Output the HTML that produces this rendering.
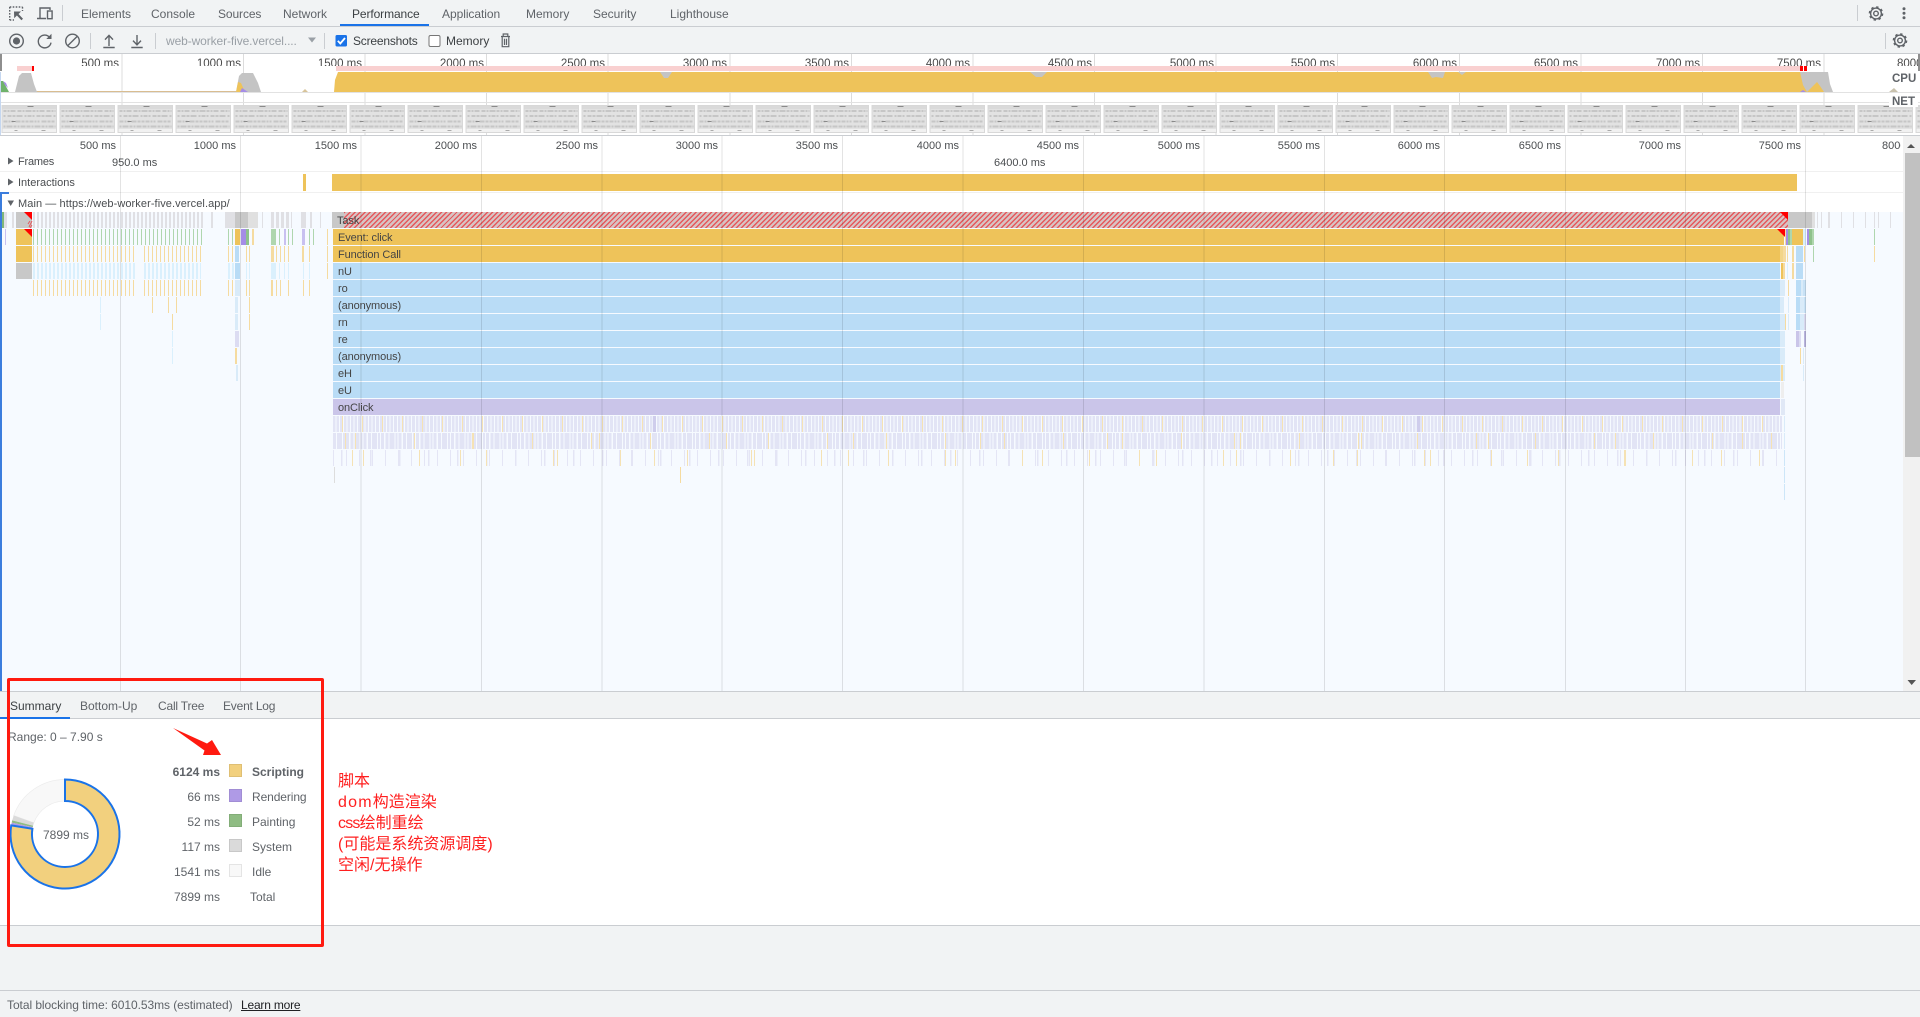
<!DOCTYPE html>
<html lang="en"><head><meta charset="utf-8"><title>Performance</title>
<style>
html,body{margin:0;padding:0;background:#fff}
#p{position:relative;width:1920px;height:1017px;overflow:hidden;background:#fff;font-family:"Liberation Sans","Noto Sans CJK SC",sans-serif;font-size:12px;color:#5f6368;filter:blur(.35px)}
.t{position:absolute;white-space:nowrap;line-height:16px}
.b{position:absolute;display:block}
i{position:absolute;display:block;height:16px}
.s{font-size:11px;color:#4a4d50}
.l{color:#444;padding-left:5px;font-size:11px;line-height:18px;font-style:normal;box-sizing:border-box;overflow:hidden;letter-spacing:-.1px}
.Y{background:#eec35a}.B{background:#b9dcf6}.P{background:#cac5e9}
.ov{position:absolute;top:54px;height:12px;overflow:hidden;width:100px;text-align:right;font-size:11.5px;line-height:20px;color:#4a4a4a}
.ru{position:absolute;top:138px;width:100px;text-align:right;font-size:11px;line-height:16px;color:#4a4d50}
.sw{position:absolute;left:229px;width:11px;height:11px;border:1px solid rgba(0,0,0,.08)}
.v{position:absolute;width:120px;left:100px;text-align:right;line-height:16px;color:#5f6368;font-size:12px}
svg{position:absolute;left:0;top:0;display:block}
</style></head><body><div id="p">

<!-- top bars -->
<div class="b" style="left:0;top:0;width:1920px;height:54px;background:#f1f3f4"></div>
<div class="b" style="left:0;top:26px;width:1920px;height:1px;background:#cacdd1"></div>
<div class="b" style="left:0;top:53px;width:1920px;height:1px;background:#cacdd1"></div>
<div class="b" style="left:340px;top:24px;width:89px;height:2px;background:#1a73e8"></div>
<div class="t" style="left:81px;top:6px">Elements</div>
<div class="t" style="left:151px;top:6px">Console</div>
<div class="t" style="left:218px;top:6px;letter-spacing:-.1px">Sources</div>
<div class="t" style="left:283px;top:6px">Network</div>
<div class="t" style="left:352px;top:6px;color:#3c4043;letter-spacing:-.1px">Performance</div>
<div class="t" style="left:442px;top:6px;letter-spacing:-.05px">Application</div>
<div class="t" style="left:526px;top:6px">Memory</div>
<div class="t" style="left:593px;top:6px">Security</div>
<div class="t" style="left:670px;top:6px">Lighthouse</div>
<div class="t" style="left:166px;top:33px;color:#9aa0a6;letter-spacing:-.1px">web-worker-five.vercel....</div>
<div class="t" style="left:353px;top:33px;color:#3c4043;letter-spacing:-.2px">Screenshots</div>
<div class="t" style="left:446px;top:33px;color:#3c4043">Memory</div>

<svg width="1920" height="54" fill="none" stroke="#5f6368" stroke-width="1.4">
 <!-- inspect -->
 <path d="M9.7 7H22.5M9.7 7V20M22.5 7V11M9.7 20H14" stroke-dasharray="1.6 1.4"/>
 <path d="M14 11.5h7l-2.5 2.5 4.5 4.8-1.6 1.5-4.5-4.8-2.7 2.7z" fill="#5f6368" stroke="none"/>
 <!-- device -->
 <path d="M40 18V8H50V10M37 18.5H46"/><rect x="47.5" y="11" width="4.6" height="7.7"/>
 <path d="M62.5 5V21M90.5 33V49M155.5 33V49M324.5 33V49M1857.5 5V21M1885.5 33V49" stroke="#cacdd1" stroke-width="1"/>
 <!-- record -->
 <circle cx="16.5" cy="41" r="6.8"/><circle cx="16.5" cy="41" r="3.6" fill="#5f6368" stroke="none"/>
 <!-- reload -->
 <path d="M49.5 37.2A6.4 6.4 0 1 0 51 42.6"/><path d="M51.5 33.8V39H46.3z" fill="#5f6368" stroke="none"/>
 <!-- clear -->
 <circle cx="72.5" cy="41" r="6.8"/><path d="M67.7 45.8L77.3 36.2"/>
 <!-- upload/download -->
 <path d="M109 46V36M105 39.6L109 35.4 113 39.6M103.3 47.5H114.7"/>
 <path d="M137 35V44M133 40.6L137 44.8 141 40.6M131.3 47.5H142.7"/>
 <path d="M308 37.5H316L312 42.5z" fill="#9aa0a6" stroke="none"/>
 <!-- checkboxes -->
 <rect x="335.5" y="35" width="11.5" height="11.5" rx="1.5" fill="#1a73e8" stroke="none"/>
 <path d="M337.8 40.8L340.3 43.5 345 38" stroke="#fff" stroke-width="1.8"/>
 <rect x="429" y="35.5" width="11" height="11" rx="1.5" fill="#fff" stroke="#767676" stroke-width="1"/>
 <!-- trash -->
 <path d="M501 36.5H510M503.2 36V34H507.8V36M502.2 37V46.7H508.8V37M504.5 38.7V45M506.5 38.7V45" stroke-width="1.2"/>
 <!-- gears -->
 <g transform="translate(1876 13.5)"><circle r="5.4"/><circle r="2.3"/><circle r="6.5" stroke-width="1.6" stroke-dasharray="2.4 2.7"/></g>
 <g transform="translate(1900 40.5)"><circle r="5.4"/><circle r="2.3"/><circle r="6.5" stroke-width="1.6" stroke-dasharray="2.4 2.7"/></g>
 <g fill="#5f6368" stroke="none"><circle cx="1904" cy="8.7" r="1.5"/><circle cx="1904" cy="13.2" r="1.5"/><circle cx="1904" cy="17.7" r="1.5"/></g>
</svg>

<!-- overview labels -->
<div class="ov" style="left:19px">500 ms</div>
<div class="ov" style="left:141px">1000 ms</div>
<div class="ov" style="left:262px">1500 ms</div>
<div class="ov" style="left:384px">2000 ms</div>
<div class="ov" style="left:505px">2500 ms</div>
<div class="ov" style="left:627px">3000 ms</div>
<div class="ov" style="left:749px">3500 ms</div>
<div class="ov" style="left:870px">4000 ms</div>
<div class="ov" style="left:992px">4500 ms</div>
<div class="ov" style="left:1114px">5000 ms</div>
<div class="ov" style="left:1235px">5500 ms</div>
<div class="ov" style="left:1357px">6000 ms</div>
<div class="ov" style="left:1478px">6500 ms</div>
<div class="ov" style="left:1600px">7000 ms</div>
<div class="ov" style="left:1721px">7500 ms</div>
<div class="ov" style="left:1897px;width:21px;text-align:left">8000 ms</div>

<!-- overview chart -->
<svg width="1920" height="136" style="top:0">
 <defs>
 <pattern id="th" width="58" height="28" patternUnits="userSpaceOnUse" patternTransform="translate(1.5 105)">
  <rect x="0" y="0" width="55.5" height="28" fill="#e2e2e2"/>
  <rect x="0" y="0" width="55.5" height="4" fill="#dadada"/>
  <rect x="26" y="1" width="6" height="1" fill="#8a8a8a"/>
  <g fill="none" stroke-width="2" stroke="#c6c6c6">
   <path d="M2 6H54" stroke-dasharray="3 1 2 1 5 2 4 1 2 1 6 1"/>
   <path d="M2 11H54" stroke-dasharray="2 2 4 1 3 1 6 2 2 1 4 1"/>
   <path d="M2 16.5H54" stroke-dasharray="4 1 2 1 2 2 5 1 3 1 3 1"/>
   <path d="M2 21.5H54" stroke-dasharray="2 1 6 1 3 1 2 1 5 1 4 1"/>
  </g>
  <rect x="10" y="16" width="4" height="1" fill="#8a8a8a"/>
  <rect x="0" y="24" width="55.5" height="4" fill="#f1f1f1"/>
  <rect x="13" y="25" width="3" height="1" fill="#aaa"/><rect x="40" y="25" width="4" height="1" fill="#aaa"/>
  <rect x=".5" y=".5" width="54.5" height="27" fill="none" stroke="#d8d8d8"/>
 </pattern>
 </defs>
 <path d="M122 54V135M243.5 54V135M365 54V135M486.5 54V135M608 54V135M730 54V135M851.5 54V135M973 54V135M1094.5 54V135M1216 54V135M1337.5 54V135M1459.5 54V135M1581 54V135M1702.5 54V135M1824 54V135" stroke="#dcdcdc" fill="none"/>
 <path d="M0 92.5H1920M0 102.5H1920" stroke="#e2e2e2" fill="none"/>
 <rect x="0" y="105" width="1920" height="28" fill="url(#th)"/>
 <rect x="17" y="66" width="15" height="5" fill="#f9d0d0"/><rect x="32" y="66" width="2" height="5" fill="#f00"/>
 <rect x="336" y="66" width="1464" height="5" fill="#f9d0d0"/><rect x="1800" y="66" width="3" height="5" fill="#f00"/><rect x="1804" y="66" width="3" height="5" fill="#f00"/>
 <rect x="36" y="91" width="200" height="1" fill="#d9bd90"/>
 <path d="M0 92V81H3L9 92Z" fill="#6fb26b"/><path d="M3 81L6 83 8 88 5 85Z" fill="#a58de6"/>
 <path d="M15 92L19 76 22 73H31L34 84 37 92Z" fill="#c4c4c4"/>
 <path d="M236 92L239 76 242 73H253L258 83 261 92Z" fill="#c4c4c4"/>
 <path d="M236 92L238 82 241 83 245 92Z" fill="#eec35a"/><path d="M240 92L242 88 248 92Z" fill="#a58de6"/>
 <path d="M302 92L305 89 308 92Z" fill="#d8c49a"/>
 <path d="M1799 72H1828L1830 84 1833 92H1800Z" fill="#c4c4c4"/>
 <path d="M334 92L335 80 338 72H1800L1803 85 1807 92Z" fill="#eec35a"/>
 <path d="M1807 92L1812 87 1817 82 1820 86 1824 92Z" fill="#eec35a"/>
 <path d="M1800 92L1803 90 1806 92Z" fill="#a58de6"/>
 <path d="M1428 72H1445L1443 78 1436 77 1432 78Z" fill="#c4c4c4"/>
 <path d="M1458 72H1466L1462 75Z" fill="#c4c4c4"/>
 <path d="M660 72H672L668 78 664 78Z" fill="#c4c4c4"/>
 <path d="M1030 72H1047L1042 77 1036 77Z" fill="#c4c4c4"/>
 <path d="M1889 92L1894 88 1898 92Z" fill="#c9c2ae"/>
 <rect x="0" y="72" width="1" height="63" fill="#c5d7f0"/>
 <rect x="0" y="54" width="2" height="17" fill="#8e8e8e"/>
 <rect x="1918" y="54" width="2" height="17" fill="#8e8e8e"/>
 <rect x="1889" y="95" width="29" height="12" fill="#fff"/>
</svg>
<div class="t" style="left:1892px;top:71px;font-weight:bold;font-size:11.5px">CPU</div>
<div class="t" style="left:1892px;top:94px;font-weight:bold;font-size:11.5px">NET</div>
<div class="b" style="left:0;top:135px;width:1920px;height:1px;background:#cacdd1"></div>

<!-- timeline -->
<div class="b" style="left:1903px;top:136px;width:17px;height:555px;background:#f1f1f1"></div>
<div class="b" style="left:1905px;top:153px;width:15px;height:304px;background:#c1c1c1"></div>
<div class="b" style="left:0;top:212px;width:1903px;height:479px;background:#f6faff"></div>
<div class="b" style="left:0;top:171px;width:1903px;height:1px;background:#f0f0f0"></div>
<div class="b" style="left:0;top:192px;width:1903px;height:1px;background:#f0f0f0"></div>
<div class="b" style="left:0;top:192px;width:9px;height:2px;background:#3b7ddd"></div>
<div class="b" style="left:0;top:192px;width:2px;height:499px;background:#3b7ddd"></div>

<div class="ru" style="left:16px">500 ms</div>
<div class="ru" style="left:136px">1000 ms</div>
<div class="ru" style="left:257px">1500 ms</div>
<div class="ru" style="left:377px">2000 ms</div>
<div class="ru" style="left:498px">2500 ms</div>
<div class="ru" style="left:618px">3000 ms</div>
<div class="ru" style="left:738px">3500 ms</div>
<div class="ru" style="left:859px">4000 ms</div>
<div class="ru" style="left:979px">4500 ms</div>
<div class="ru" style="left:1100px">5000 ms</div>
<div class="ru" style="left:1220px">5500 ms</div>
<div class="ru" style="left:1340px">6000 ms</div>
<div class="ru" style="left:1461px">6500 ms</div>
<div class="ru" style="left:1581px">7000 ms</div>
<div class="ru" style="left:1701px">7500 ms</div>
<div class="b" style="left:1882px;top:138px;width:19px;height:16px;overflow:hidden;font-size:11px;line-height:16px;color:#4a4d50;white-space:nowrap">8000 ms</div>

<div class="t s" style="left:18px;top:153.5px;letter-spacing:-.2px">Frames</div>
<div class="t s" style="left:112px;top:154.5px">950.0 ms</div>
<div class="t s" style="left:994px;top:154.5px">6400.0 ms</div>
<div class="t s" style="left:18px;top:174.5px">Interactions</div>
<div class="t s" style="left:18px;top:195.5px;letter-spacing:.08px">Main — https://web-worker-five.vercel.app/</div>
<i style="left:303px;top:174px;width:3px;height:17px" class="Y"></i>
<i style="left:332px;top:174px;width:1465px;height:17px" class="Y"></i>

<!-- flame: left area -->
<i style="left:2px;top:212px;width:2px;background:#7fb77a"></i>
<i style="left:4px;top:212px;width:3px;background:#e0e0e8"></i>
<i style="left:12px;top:212px;width:2px;background:#e0e0e4"></i>
<i style="left:16px;top:212px;width:16px;background:#c8c8c8"></i>
<i style="left:33px;top:212px;width:172px;background:repeating-linear-gradient(90deg,#e0e0e4 0 2px,transparent 2px 4px)"></i>
<i style="left:211px;top:212px;width:2px;background:#e0e0e4"></i>
<i style="left:225px;top:212px;width:10px;background:#e0e0e4"></i>
<i style="left:235px;top:212px;width:13px;background:#c8c8c8"></i>
<i style="left:248px;top:212px;width:10px;background:#e0e0e0"></i>
<i style="left:262px;top:212px;width:1px;background:#e0e0e4"></i>
<i style="left:271px;top:212px;width:21px;background:repeating-linear-gradient(90deg,#e0e0e4 0 3px,transparent 3px 5px)"></i>
<i style="left:301px;top:212px;width:5px;background:#e0e0e4"></i>
<i style="left:310px;top:212px;width:2px;background:#e0e0e4"></i>
<i style="left:320px;top:212px;width:1px;background:#e0e0e4"></i>

<i style="left:5px;top:229px;width:1px;background:#c8c0f0"></i>
<i style="left:16px;top:229px;width:16px" class="Y"></i>
<i style="left:33px;top:229px;width:172px;background:repeating-linear-gradient(90deg,#afd6ae 0 1px,transparent 1px 4px)"></i>
<i style="left:228px;top:229px;width:1px;background:#afd6ae"></i><i style="left:232px;top:229px;width:1px;background:#afd6ae"></i>
<i style="left:235px;top:229px;width:5px" class="Y"></i><i style="left:241px;top:229px;width:5px;background:#a58de6"></i>
<i style="left:246px;top:229px;width:3px;background:#8fc28c"></i><i style="left:252px;top:229px;width:2px;background:#f5dba0"></i>
<i style="left:271px;top:229px;width:5px;background:#afd6ae"></i><i style="left:279px;top:229px;width:1px;background:#afd6ae"></i><i style="left:284px;top:229px;width:2px;background:#c8c0f0"></i><i style="left:288px;top:229px;width:1px;background:#afd6ae"></i><i style="left:292px;top:229px;width:1px;background:#afd6ae"></i>
<i style="left:302px;top:229px;width:3px;background:#c8c0f0"></i><i style="left:309px;top:229px;width:1px;background:#afd6ae"></i><i style="left:313px;top:229px;width:1px;background:#afd6ae"></i>
<i style="left:327px;top:229px;width:1px;background:#f5dba0"></i>

<i style="left:16px;top:246px;width:16px" class="Y"></i>
<i style="left:33px;top:246px;width:104px;background:repeating-linear-gradient(90deg,#f5dba0 0 1px,transparent 1px 4px)"></i>
<i style="left:144px;top:246px;width:57px;background:repeating-linear-gradient(90deg,#f5dba0 0 1px,transparent 1px 4px)"></i>
<i style="left:228px;top:246px;width:1px;background:#f5dba0"></i><i style="left:232px;top:246px;width:1px;background:#f5dba0"></i>
<i style="left:235px;top:246px;width:4px" class="B"></i><i style="left:246px;top:246px;width:1px;background:#f5dba0"></i><i style="left:249px;top:246px;width:1px;background:#f5dba0"></i>
<i style="left:271px;top:246px;width:3px;background:#f5dba0"></i><i style="left:276px;top:246px;width:1px;background:#f5dba0"></i><i style="left:280px;top:246px;width:1px;background:#f5dba0"></i><i style="left:284px;top:246px;width:1px;background:#f5dba0"></i><i style="left:288px;top:246px;width:1px;background:#f5dba0"></i>
<i style="left:302px;top:246px;width:2px;background:#f5dba0"></i><i style="left:309px;top:246px;width:1px;background:#f5dba0"></i><i style="left:327px;top:246px;width:1px;background:#f5dba0"></i>

<i style="left:16px;top:263px;width:16px;background:#c8c8c8"></i>
<i style="left:33px;top:263px;width:104px;background:repeating-linear-gradient(90deg,#daf0fd 0 2px,transparent 2px 4px)"></i>
<i style="left:144px;top:263px;width:57px;background:repeating-linear-gradient(90deg,#daf0fd 0 2px,transparent 2px 4px)"></i>
<i style="left:228px;top:263px;width:2px;background:#daf0fd"></i><i style="left:232px;top:263px;width:2px;background:#daf0fd"></i>
<i style="left:235px;top:263px;width:5px" class="B"></i><i style="left:246px;top:263px;width:1px;background:#daf0fd"></i><i style="left:249px;top:263px;width:1px;background:#daf0fd"></i>
<i style="left:271px;top:263px;width:5px;background:#daf0fd"></i><i style="left:279px;top:263px;width:1px;background:#daf0fd"></i><i style="left:284px;top:263px;width:1px;background:#daf0fd"></i><i style="left:288px;top:263px;width:1px;background:#daf0fd"></i>
<i style="left:303px;top:263px;width:1px;background:#daf0fd"></i><i style="left:309px;top:263px;width:1px;background:#daf0fd"></i><i style="left:327px;top:263px;width:1px;background:#f5dba0"></i>

<i style="left:33px;top:280px;width:104px;background:repeating-linear-gradient(90deg,#f5dba0 0 1px,transparent 1px 4px)"></i>
<i style="left:144px;top:280px;width:57px;background:repeating-linear-gradient(90deg,#f5dba0 0 1px,transparent 1px 4px)"></i>
<i style="left:228px;top:280px;width:1px;background:#f5dba0"></i><i style="left:232px;top:280px;width:1px;background:#f5dba0"></i>
<i style="left:235px;top:280px;width:5px;background:#d9ebf9"></i><i style="left:246px;top:280px;width:1px;background:#f5dba0"></i><i style="left:249px;top:280px;width:1px;background:#f5dba0"></i>
<i style="left:271px;top:280px;width:2px;background:#f5dba0"></i><i style="left:276px;top:280px;width:1px;background:#f5dba0"></i><i style="left:280px;top:280px;width:1px;background:#f5dba0"></i><i style="left:288px;top:280px;width:1px;background:#f5dba0"></i>
<i style="left:303px;top:280px;width:1px;background:#f5dba0"></i><i style="left:309px;top:280px;width:1px;background:#f5dba0"></i>

<i style="left:100px;top:297px;width:1px;background:#daf0fd"></i><i style="left:152px;top:297px;width:1px;background:#f5dba0"></i><i style="left:168px;top:297px;width:1px;background:#f5dba0"></i><i style="left:176px;top:297px;width:1px;background:#f5dba0"></i>
<i style="left:235px;top:297px;width:3px;background:#d9ebf9"></i><i style="left:249px;top:297px;width:1px;background:#f5dba0"></i>
<i style="left:100px;top:314px;width:1px;background:#daf0fd"></i><i style="left:172px;top:314px;width:1px;background:#f5dba0"></i><i style="left:235px;top:314px;width:3px;background:#d9ebf9"></i><i style="left:249px;top:314px;width:1px;background:#f5dba0"></i>
<i style="left:172px;top:331px;width:1px;background:#daf0fd"></i><i style="left:235px;top:331px;width:4px;background:#dcdcf2"></i>
<i style="left:172px;top:348px;width:1px;background:#daf0fd"></i><i style="left:235px;top:348px;width:2px;background:#f5dba0"></i>
<i style="left:236px;top:365px;width:2px;background:#d9ebf9"></i>

<!-- flame: main bars -->
<i style="left:332px;top:212px;width:12px;background:#c8c8c8"></i>
<div class="b" style="left:344px;top:212px;width:1444px;height:16px;background:repeating-linear-gradient(135deg,#e5585c 0 1.4px,#d8c4c4 1.4px 3.6px)"></div>
<i class="l" style="left:332px;top:212px;width:40px">Task</i>
<i class="Y l" style="left:333px;top:229px;width:1451px">Event: click</i>
<i class="Y l" style="left:333px;top:246px;width:1447px">Function Call</i>
<i class="B l" style="left:333px;top:263px;width:1447px">nU</i>
<i class="B l" style="left:333px;top:280px;width:1447px">ro</i>
<i class="B l" style="left:333px;top:297px;width:1447px">(anonymous)</i>
<i class="B l" style="left:333px;top:314px;width:1447px">rn</i>
<i class="B l" style="left:333px;top:331px;width:1447px">re</i>
<i class="B l" style="left:333px;top:348px;width:1447px">(anonymous)</i>
<i class="B l" style="left:333px;top:365px;width:1447px">eH</i>
<i class="B l" style="left:333px;top:382px;width:1447px">eU</i>
<i class="P l" style="left:333px;top:399px;width:1447px">onClick</i>

<!-- dense ticks under onClick -->
<i style="left:333px;top:416px;width:1449px;background:repeating-linear-gradient(90deg,transparent 0 9px,#f5e2b4 9px 10px,transparent 10px 20px),repeating-linear-gradient(90deg,#e2e4f5 0 2.6px,transparent 2.6px 3.6px)"></i>
<i style="left:653px;top:416px;width:3px;background:#cfcdec"></i>
<i style="left:1417px;top:416px;width:3px;background:#cfcdec"></i>
<i style="left:333px;top:433px;width:1449px;background:repeating-linear-gradient(90deg,transparent 0 22px,#f5e2b4 22px 23.2px,transparent 23.2px 59px),repeating-linear-gradient(90deg,transparent 0 12px,#f5e2b4 12px 13px,transparent 13px 127px),repeating-linear-gradient(90deg,#e2e4f5 0 3px,transparent 3px 3.8px,#e2e4f5 3.8px 9px,transparent 9px 10px,#e2e4f5 10px 12px,transparent 12px 13px,#e2e4f5 13px 16px,transparent 16px 17.5px)"></i>
<i style="left:333px;top:450px;width:1449px;background:repeating-linear-gradient(90deg,transparent 0 19px,#f5e2b4 19px 20.2px,transparent 20.2px 67px),repeating-linear-gradient(90deg,transparent 0 30px,#f5e2b4 30px 31px,transparent 31px 97px),repeating-linear-gradient(90deg,#e4e5f5 0 1.2px,transparent 1.2px 13px),repeating-linear-gradient(90deg,transparent 0 8px,#e4e5f5 8px 9.5px,transparent 9.5px 29px)"></i>
<i style="left:334px;top:467px;width:1px;background:#ddd"></i>
<i style="left:680px;top:467px;width:1px;background:#f5dba0"></i>

<!-- flame: right end -->
<i style="left:1780px;top:246px;width:3px;background:#f2d589"></i><i style="left:1783px;top:246px;width:3px;background:#f5dba0"></i>
<i style="left:1781px;top:263px;width:2px" class="Y"></i><i style="left:1783px;top:263px;width:2px;background:#f5dba0"></i>
<i style="left:1780px;top:280px;width:5px;background:#d9ebf9"></i><i style="left:1780px;top:297px;width:4px;background:#d9ebf9"></i><i style="left:1780px;top:314px;width:5px;background:#d9ebf9"></i><i style="left:1780px;top:331px;width:5px;background:#d9ebf9"></i><i style="left:1780px;top:348px;width:5px;background:#d9ebf9"></i><i style="left:1780px;top:365px;width:5px;background:#d9ebf9"></i><i style="left:1781px;top:365px;width:2px;background:#f5dba0"></i>
<i style="left:1781px;top:382px;width:3px;background:#eee"></i><i style="left:1781px;top:399px;width:4px;background:#e0e8f6"></i>
<i style="left:1784px;top:416px;width:1px;background:#d9ebf9"></i><i style="left:1784px;top:433px;width:1px;background:#d9ebf9"></i><i style="left:1784px;top:450px;width:1px;background:#cde6f8"></i><i style="left:1784px;top:467px;width:1px;background:#cde6f8"></i><i style="left:1784px;top:484px;width:1px;background:#cde6f8"></i>

<i style="left:1788px;top:212px;width:24px;background:#c8c8c8"></i><i style="left:1812px;top:212px;width:3px;background:#e0e0e0"></i>
<i style="left:1817px;top:212px;width:1px;background:#e0e0e4"></i><i style="left:1821px;top:212px;width:1px;background:#e0e0e4"></i><i style="left:1828px;top:212px;width:2px;background:#e0e0e4"></i><i style="left:1841px;top:212px;width:1px;background:#e0e0e4"></i><i style="left:1853px;top:212px;width:1px;background:#e0e0e4"></i><i style="left:1865px;top:212px;width:1px;background:#e0e0e4"></i><i style="left:1874px;top:212px;width:1px;background:#e0e0e4"></i><i style="left:1878px;top:212px;width:1px;background:#e0e0e4"></i><i style="left:1890px;top:212px;width:1px;background:#e0e0e4"></i>

<i style="left:1785px;top:229px;width:1px;background:#f5dba0"></i><i style="left:1786px;top:229px;width:2px;background:#a58de6"></i><i style="left:1788px;top:229px;width:2px;background:#8fc28c"></i><i style="left:1790px;top:229px;width:2px;background:#afd6ae"></i><i style="left:1792px;top:229px;width:11px" class="Y"></i><i style="left:1803px;top:229px;width:3px;background:#daf0fd"></i><i style="left:1807px;top:229px;width:2px;background:#a58de6"></i><i style="left:1809px;top:229px;width:3px;background:#8fc28c"></i><i style="left:1812px;top:229px;width:2px;background:#afd6ae"></i><i style="left:1874px;top:229px;width:1px;background:#afd6ae"></i>

<i style="left:1787px;top:246px;width:1px;background:#f5dba0"></i><i style="left:1792px;top:246px;width:2px;background:#f5dba0"></i><i style="left:1796px;top:246px;width:7px" class="B"></i><i style="left:1804px;top:246px;width:1px;background:#f5dba0"></i><i style="left:1813px;top:246px;width:1px;background:#afd6ae"></i><i style="left:1874px;top:246px;width:1px;background:#f5dba0"></i>
<i style="left:1787px;top:263px;width:1px;background:#daf0fd"></i><i style="left:1792px;top:263px;width:2px;background:#f5dba0"></i><i style="left:1796px;top:263px;width:7px" class="B"></i>
<i style="left:1788px;top:280px;width:1px;background:#f5dba0"></i><i style="left:1796px;top:280px;width:5px" class="B"></i><i style="left:1801px;top:280px;width:2px;background:#d9ebf9"></i><i style="left:1803px;top:280px;width:3px;background:#c8e2f6"></i>
<i style="left:1788px;top:297px;width:1px;background:#d9ebf9"></i><i style="left:1796px;top:297px;width:4px" class="B"></i><i style="left:1800px;top:297px;width:4px;background:#d9ebf9"></i><i style="left:1804px;top:297px;width:2px;background:#c8e2f6"></i>
<i style="left:1788px;top:314px;width:1px;background:#d9ebf9"></i><i style="left:1785px;top:314px;width:1px;background:#f5dba0"></i><i style="left:1796px;top:314px;width:4px" class="B"></i><i style="left:1800px;top:314px;width:4px;background:#d9ebf9"></i><i style="left:1804px;top:314px;width:2px;background:#d8d8ee"></i>
<i style="left:1796px;top:331px;width:3px;background:#cac5e9"></i><i style="left:1799px;top:331px;width:2px;background:#dcdcf2"></i><i style="left:1804px;top:331px;width:2px;background:#b9b4de"></i>
<i style="left:1800px;top:348px;width:1px;background:#f5dba0"></i><i style="left:1803px;top:348px;width:1px;background:#d9ebf9"></i><i style="left:1803px;top:365px;width:1px;background:#d9ebf9"></i>

<svg width="1920" height="1017" style="pointer-events:none" fill="none">
 <path d="M24 212H32V220Z" fill="#f00"/><path d="M24 229H32V237Z" fill="#f00"/>
 <path d="M1780 212H1788V220Z" fill="#f00"/><path d="M1777 229H1785V237Z" fill="#f00"/>
 <path d="M30 221L28 224M32 221L29 227M32 225L30 228" stroke="#e5585c"/>
 <path d="M120.5 136V691M240.5 136V691M361 136V691M481.5 136V691M602 136V691M722 136V691M842.5 136V691M963 136V691M1083.5 136V691M1204 136V691M1324.5 136V691M1444.5 136V691M1565.5 136V691M1685.5 136V691M1805.5 136V691" stroke="#000" stroke-opacity=".11"/>
 <path d="M8 157.5L13.5 161 8 164.5ZM8 178.5L13.5 182 8 185.5ZM7.5 200.5H14L10.7 206Z" fill="#5f6368"/>
 <path d="M1907 148H1915L1911 144ZM1907.5 680H1916L1911.7 685Z" fill="#555"/>
</svg>

<!-- summary -->
<div class="b" style="left:0;top:691px;width:1920px;height:1px;background:#cacdd1"></div>
<div class="b" style="left:0;top:692px;width:1920px;height:26px;background:#f1f3f4"></div>
<div class="b" style="left:0;top:718px;width:1920px;height:1px;background:#cacdd1"></div>
<div class="b" style="left:0;top:717px;width:70px;height:2px;background:#1a73e8"></div>
<div class="b" style="left:0;top:925px;width:1920px;height:1px;background:#cacdd1"></div>
<div class="b" style="left:0;top:926px;width:1920px;height:91px;background:#f1f3f4"></div>
<div class="b" style="left:0;top:990px;width:1920px;height:1px;background:#cacdd1"></div>

<div class="t" style="left:10px;top:698px;color:#3c4043">Summary</div>
<div class="t" style="left:80px;top:698px">Bottom-Up</div>
<div class="t" style="left:158px;top:698px;letter-spacing:-.2px">Call Tree</div>
<div class="t" style="left:223px;top:698px;letter-spacing:-.2px">Event Log</div>
<div class="t" style="left:8px;top:729px">Range: 0 – 7.90 s</div>

<svg width="1920" height="1017" fill="none">
 <path d="M65 779.5A54.5 54.5 0 0 0 13.7 815.5L33.9 822.8A33 33 0 0 1 65 801Z" fill="#f8f8f8" stroke="#ececec" stroke-width=".7"/>
 <path d="M13.7 815.5L12.2 820.4 33.1 825.7 33.9 822.8Z" fill="#dadada"/>
 <path d="M12.2 820.4L11.7 822.6 32.7 827.1 33.1 825.7Z" fill="#8fbc83"/>
 <path d="M11.7 822.6L11.2 825.4 32.4 828.8 32.7 827.1Z" fill="#af9ae6"/>
 <path d="M65 779.5A54.5 54.5 0 1 1 11.2 825.4L32.4 828.8A33 33 0 1 0 65 801Z" fill="#f2d07e" stroke="#1a73e8" stroke-width="2"/>
 <path d="M173 728L207 743.5 212 740 221 755 203 755 204.5 750.5Z" fill="#ff1a10"/>
</svg>
<div class="t" style="left:43px;top:826.5px;color:#5f6368">7899 ms</div>

<div class="v" style="top:764px;font-weight:bold">6124 ms</div>
<div class="v" style="top:789px">66 ms</div>
<div class="v" style="top:814px">52 ms</div>
<div class="v" style="top:839px">117 ms</div>
<div class="v" style="top:864px">1541 ms</div>
<div class="v" style="top:889px">7899 ms</div>
<div class="sw" style="top:764px;background:#f2d07e"></div>
<div class="sw" style="top:789px;background:#af9ae6"></div>
<div class="sw" style="top:814px;background:#8fbc83"></div>
<div class="sw" style="top:839px;background:#dadada"></div>
<div class="sw" style="top:864px;background:#f8f8f8"></div>
<div class="t" style="left:252px;top:764px;font-weight:bold">Scripting</div>
<div class="t" style="left:252px;top:789px;letter-spacing:-.1px">Rendering</div>
<div class="t" style="left:252px;top:814px">Painting</div>
<div class="t" style="left:252px;top:839px">System</div>
<div class="t" style="left:252px;top:864px">Idle</div>
<div class="t" style="left:250px;top:889px">Total</div>

<div class="b" style="left:338px;top:771px;color:#ff1f1f;font-size:16px;line-height:21px;white-space:nowrap">脚本<br><span style="letter-spacing:1.2px">dom</span>构造渲染<br><span style="letter-spacing:-.8px">css</span>绘制重绘<br>(可能是系统资源调度)<br>空闲/无操作</div>

<div class="b" style="left:7px;top:678px;width:311px;height:263px;border:3px solid #ff1a10;border-radius:2px"></div>

<div class="t" style="left:7px;top:997px;letter-spacing:-.06px">Total blocking time: 6010.53ms (estimated)</div>
<div class="t" style="left:241px;top:997px;color:#202124;text-decoration:underline;letter-spacing:-.2px">Learn more</div>
</div></body></html>
